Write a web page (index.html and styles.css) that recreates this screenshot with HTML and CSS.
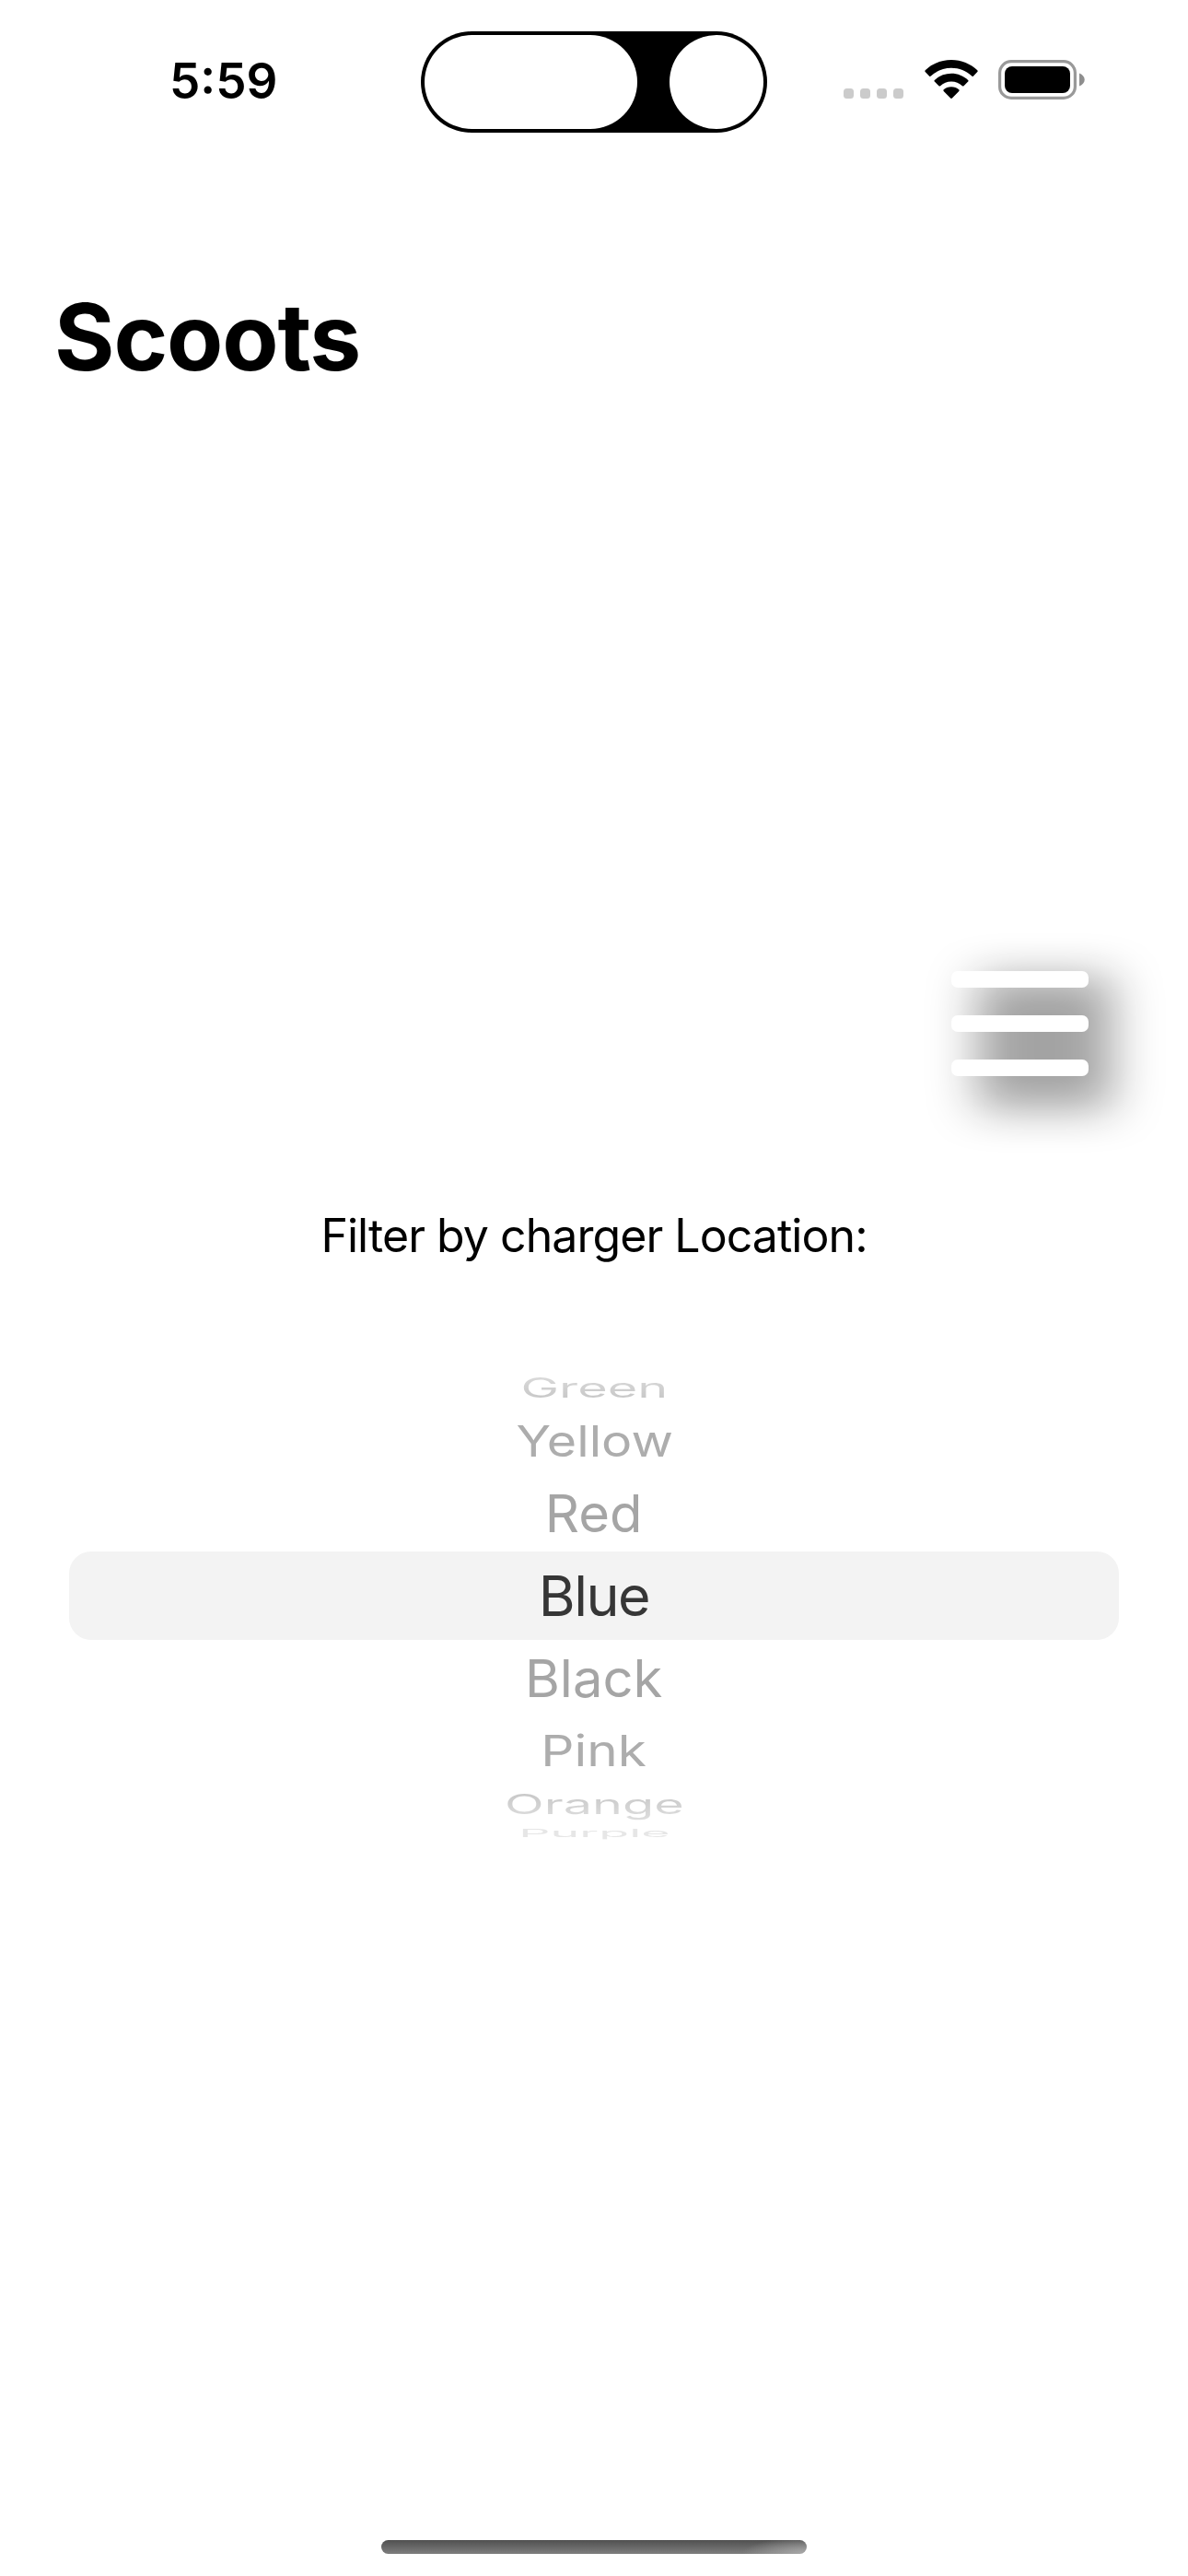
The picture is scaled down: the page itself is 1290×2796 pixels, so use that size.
FILE: index.html
```html
<!DOCTYPE html>
<html lang="en">
<head>
<meta charset="utf-8">
<title>Scoots</title>
<link rel="stylesheet" href="styles.css">
</head>
<body>
<div class="screen">
  <header class="status">
    <div class="time"><span>5:59</span></div>
    <div class="island"><i class="pill"></i><i class="lens"></i></div>
    <div class="indicators">
      <div class="dots"><i></i><i></i><i></i><i></i></div>
      <svg class="wifi" width="58" height="43" viewBox="0 0 58 43">
        <path d="M29 0C40 0 50 4.300 57.300 11.300Q58 12.200 57.300 13L52.800 17.700Q52 18.300 51.200 17.600C45.200 12 37.500 8.800 29 8.800S12.800 12 6.800 17.600Q6 18.300 5.200 17.700L.7 13Q0 12.200 .7 11.300C8 4.300 18 0 29 0Z"/>
        <path d="M29 14.800C36 14.800 42.400 17.500 47.200 21.900Q48 22.700 47.200 23.500L42.500 28.200Q41.700 28.900 40.900 28.200C37.700 25.300 33.600 23.600 29 23.600S20.300 25.300 17.100 28.200Q16.300 28.900 15.500 28.200L10.800 23.500Q10 22.700 10.800 21.900C15.600 17.500 22 14.800 29 14.800Z"/>
        <path d="M29 29.300C32.400 29.300 35.200 30.400 37.300 32.300Q38.100 33.100 37.300 33.900L29.900 41.500Q29 42.400 28.100 41.500L20.700 33.900Q19.900 33.100 20.700 32.300C22.800 30.400 25.600 29.300 29 29.300Z"/>
      </svg>
      <svg class="battery" width="95" height="43" viewBox="0 0 95 43">
        <rect x="1.600" y="1.600" width="81.800" height="39.800" rx="12.500" fill="none" stroke="#999" stroke-width="3.200"/>
        <rect x="7" y="7" width="71" height="29" rx="8"/>
        <path d="M88 14.500C91.600 16 93.700 18.500 93.700 21.500S91.600 27 88 28.500Z" fill="#8e8e8e"/>
      </svg>
    </div>
  </header>
  <h1 class="title">Scoots</h1>
  <div class="menu-row">
    <div class="menu"><i></i><i></i><i></i></div>
  </div>
  <p class="label">Filter by charger Location:</p>
  <div class="picker">
    <div class="row green"><span>Green</span></div>
    <div class="row yellow"><span>Yellow</span></div>
    <div class="row red"><span>Red</span></div>
    <div class="row blue"><span>Blue</span></div>
    <div class="row black"><span>Black</span></div>
    <div class="row pink"><span>Pink</span></div>
    <div class="row orange"><span>Orange</span></div>
    <div class="row purple"><span>Purple</span></div>
  </div>
  <div class="home"></div>
</div>
</body>
</html>
```
FILE: styles.css
```css
* { box-sizing: border-box; }
body { margin: 0; background: #fff; color: #000; font-family: Inter, "Liberation Sans", sans-serif; }
.screen { width: 1290px; height: 2796px; display: flex; flex-direction: column; overflow: hidden; }

.status { height: 178px; flex: none; display: flex; align-items: flex-start; padding-top: 34px; }
.time { width: 457px; height: 110px; padding-left: 184px; line-height: 109px; font-size: 53px; font-weight: 600; }
.island { width: 376px; height: 110px; border-radius: 55px; background: #000; display: flex; justify-content: space-between; padding: 4px; }
.island i { background: #fff; height: 102px; border-radius: 51px; }
.pill { width: 231px; }
.lens { width: 102px; }
.indicators { display: flex; align-items: flex-end; height: 74px; padding-left: 83px; }
.dots { display: flex; gap: 7px; margin-bottom: 1px; }
.dots i { width: 11px; height: 11px; border-radius: 3.500px; background: #cbcbcb; }
.wifi { margin-left: 23px; }
.battery { margin-left: 22px; }

.title { margin: 0; height: 376px; flex: none; padding: 128px 0 0 59px; font-size: 100px; line-height: 120px; font-weight: 700; letter-spacing: -1.100px; }

.menu-row { height: 742px; flex: none; display: flex; justify-content: flex-end; padding: 500px 108px 0 0; }
.menu { width: 149px; height: 114px; display: flex; flex-direction: column; justify-content: space-between; filter: drop-shadow(27px 21px 26px rgba(0, 0, 0, .96)); }
.menu i { height: 18px; border-radius: 7px; background: #fff; }

.label { margin: 0; height: 189px; flex: none; padding-top: 15px; text-align: center; font-size: 50px; line-height: 60px; letter-spacing: -.950px; white-space: nowrap; }

.picker { display: flex; flex-direction: column; width: 1140px; margin: 0 auto; flex: none; font-size: 61px; color: #a5a5a5; }
.row { display: flex; align-items: center; justify-content: center; line-height: 74px; }
.row span { display: block; flex: none; }
.green, .orange { height: 42px; }
.yellow, .pink { height: 74px; }
.red, .black { height: 83px; }
.purple { height: 21px; }
.blue { height: 96px; border-radius: 24px; background: #f3f3f3; color: #363636; letter-spacing: -1.500px; }
.yellow, .pink { color: #adadad; }
.green span { transform: scale(.915, .485); background: linear-gradient(#dedede, #c3c3c3); background-clip: text; color: transparent; }
.yellow span { transform: translateX(1px) scale(.91, .767); }
.red span { transform: scale(.95, .925); }
.black span { transform: scale(.95, .925); }
.pink span { transform: scale(.93, .767); }
.orange span { transform: scale(.915, .485); background: linear-gradient(#c3c3c3, #dedede); background-clip: text; color: transparent; }
.purple span { transform: scale(.88, .2); color: #e6e6e6; }

.home { width: 462px; height: 15px; margin: auto auto 24px; border-radius: 8px; background: radial-gradient(ellipse 70px 18px at 100% 100%, #aaa, transparent), linear-gradient(#505050, #7e7e7e); }
```
